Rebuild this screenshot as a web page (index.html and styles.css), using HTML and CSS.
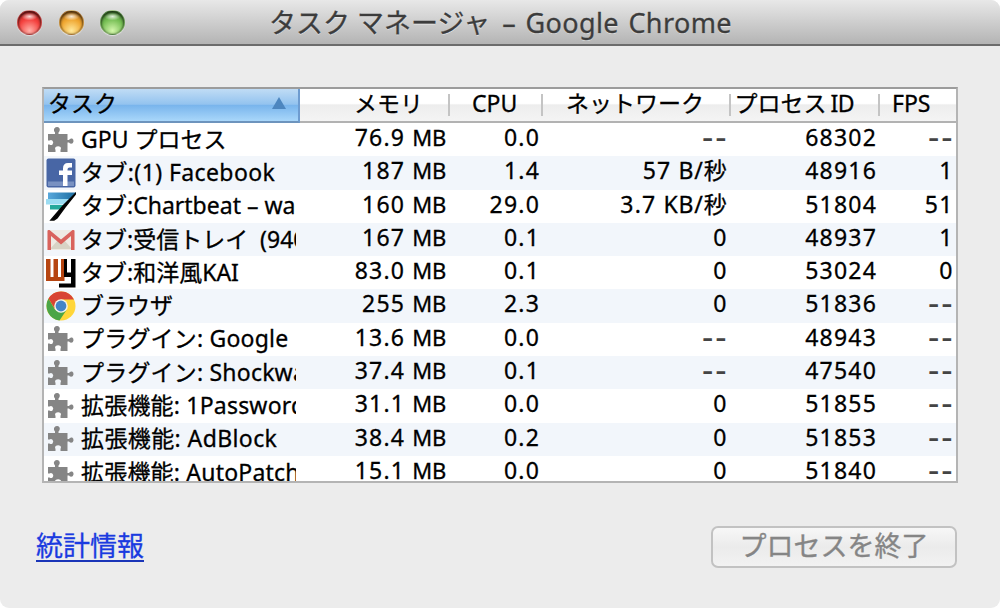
FILE: index.html
```
<!DOCTYPE html>
<html lang="ja">
<head>
    <meta charset="UTF-8">
    <title>タスク マネージャ</title>
    <link rel="stylesheet" href="styles.css">
</head>
<body>
<svg class="defs" width="0" height="0">
    <defs>
        <linearGradient id="stripe" x1="0" y1="0" x2="1" y2="0">
            <stop offset="0" stop-color="#58a8dc"/>
            <stop offset="1" stop-color="#1c6da0"/>
        </linearGradient>
        <symbol id="puzzle" viewBox="0 0 30 30">
            <path fill="#858585" d="M2 9H9V7.500Q7.500 6 8 4Q9 1.800 11.200 2Q13.900 2.300 13.800 5Q13.500 6.500 12.500 7.500V9H21.500V15H23Q24 13 26.200 13.600Q27.800 14.400 27.500 16.500Q27 18.800 25 18.700Q23.500 18.500 23 17.500H21.500V27H14.500V25Q15.500 23 14.500 21.900Q12 20.500 9.600 22Q8.500 23.500 9.500 25V27H2V19.500H3.500Q5 20.700 6.500 19.500Q8 17.500 6.500 15.700Q5 14.300 3.500 15.500H2Z"/>
        </symbol>
        <symbol id="facebook" viewBox="0 0 30 30">
            <rect x="0.500" y="0.500" width="29" height="29" rx="2" fill="#4866a5"/>
            <rect x="2" y="23.500" width="26" height="4.500" fill="#7891c2"/>
            <path fill="#fff" d="M17 28V17H13V12.500H17V10.500Q17 5 22 5H26V9.500H23.500Q21.500 9.500 21.500 11.500V12.500H26V17H21.500V28Z"/>
        </symbol>
        <symbol id="chartbeat" viewBox="0 0 30 30">
            <path fill="url(#stripe)" d="M2 1.500H30L25 8H2Z"/>
            <path fill="#9bdcf2" d="M-2 8H24L19 13.500H-2Z"/>
            <path fill="#24a99b" d="M4 14H18L14 18.500H4Z"/>
            <path d="M31 1L17 15L5 29H8L11 27L19 16Z" stroke="#050505" stroke-width="1.500"/>
        </symbol>
        <symbol id="gmail" viewBox="0 0 30 30">
            <rect x="1.500" y="5" width="27" height="20" rx="1" fill="#eeeae3"/>
            <path d="M4 24L12 15L15 17.500L18 15L26 24Z" fill="#d8d3c5"/>
            <path d="M1.500 25V6Q1.500 4.500 3.500 5L15 14.500L26.500 5Q28.500 4.500 28.500 6V25H25V11L15 19.500L5 11V25Z" fill="#d9635d"/>
        </symbol>
        <symbol id="wy" viewBox="0 0 30 30">
            <path fill="#b64511" d="M0 1H4.500V19H7.500V1H12V19H15V1H18.500V23H0Z"/>
            <path d="M18 1H21V14.500H25V1H29.500V29.500H13V25.500H25V19H18Z"/>
        </symbol>
        <symbol id="chrome" viewBox="0 0 30 30">
            <circle cx="15" cy="15" r="14.500" fill="#ffd63a"/>
            <path fill="#4ba547" d="M2.500 7.600A14.500 14.500 0 0 0 13.500 29.400L20.800 18.500L9 18.500Z"/>
            <path fill="#d84435" d="M2.500 7.600A14.500 14.500 0 0 1 28 8.500H15L9 18Z"/>
            <circle cx="15" cy="15" r="6.800" fill="#f5f5ed"/>
            <circle cx="15" cy="15" r="5.400" fill="#4385c8"/>
        </symbol>
    </defs>
</svg>
<div class="window">
    <div class="titlebar">
        <div class="lights">
            <span class="light red"></span>
            <span class="light yellow"></span>
            <span class="light green"></span>
        </div>
        <h1 class="title"><span class="title-ja">タスク マネージャ</span><span class="title-en">– Google Chrome</span></h1>
    </div>
    <div class="table">
        <div class="row head">
            <div class="th sorted"><span>タスク</span><svg class="arrow" width="16" height="14"><path d="M8 1L15 13H1Z" fill="#4d86bf"/></svg></div>
            <div class="th mem">メモリ</div>
            <div class="th cpu">CPU</div>
            <div class="th net">ネットワーク</div>
            <div class="th pid">プロセス <span>ID</span></div>
            <div class="th fps">FPS</div>
        </div>
        <div class="body">
            <div class="row"><div class="name"><svg class="icon"><use href="#puzzle"/></svg><span class="label">GPU プロセス</span></div><div class="num">76.9 <span class="unit">MB</span></div><div class="num">0.0</div><div class="num dash">--</div><div class="num">68302</div><div class="num dash">--</div></div>
            <div class="row"><div class="name"><svg class="icon"><use href="#facebook"/></svg><span class="label wider">タブ:(1) Facebook</span></div><div class="num">187 <span class="unit">MB</span></div><div class="num">1.4</div><div class="num">57 <span class="rate">B/秒</span></div><div class="num">48916</div><div class="num">1</div></div>
            <div class="row"><div class="name"><svg class="icon"><use href="#chartbeat"/></svg><span class="label">タブ:Chartbeat – wa</span></div><div class="num">160 <span class="unit">MB</span></div><div class="num">29.0</div><div class="num">3.7 <span class="rate">KB/秒</span></div><div class="num">51804</div><div class="num">51</div></div>
            <div class="row"><div class="name"><svg class="icon"><use href="#gmail"/></svg><span class="label">タブ:受信トレイ&nbsp; (940</span></div><div class="num">167 <span class="unit">MB</span></div><div class="num">0.1</div><div class="num">0</div><div class="num">48937</div><div class="num">1</div></div>
            <div class="row"><div class="name"><svg class="icon"><use href="#wy"/></svg><span class="label">タブ:和洋風KAI</span></div><div class="num">83.0 <span class="unit">MB</span></div><div class="num">0.1</div><div class="num">0</div><div class="num">53024</div><div class="num">0</div></div>
            <div class="row"><div class="name"><svg class="icon"><use href="#chrome"/></svg><span class="label">ブラウザ</span></div><div class="num">255 <span class="unit">MB</span></div><div class="num">2.3</div><div class="num">0</div><div class="num">51836</div><div class="num dash">--</div></div>
            <div class="row"><div class="name"><svg class="icon"><use href="#puzzle"/></svg><span class="label wide">プラグイン: Google</span></div><div class="num">13.6 <span class="unit">MB</span></div><div class="num">0.0</div><div class="num dash">--</div><div class="num">48943</div><div class="num dash">--</div></div>
            <div class="row"><div class="name"><svg class="icon"><use href="#puzzle"/></svg><span class="label wide">プラグイン: Shockwa</span></div><div class="num">37.4 <span class="unit">MB</span></div><div class="num">0.1</div><div class="num dash">--</div><div class="num">47540</div><div class="num dash">--</div></div>
            <div class="row"><div class="name"><svg class="icon"><use href="#puzzle"/></svg><span class="label wide">拡張機能: 1Password</span></div><div class="num">31.1 <span class="unit">MB</span></div><div class="num">0.0</div><div class="num">0</div><div class="num">51855</div><div class="num dash">--</div></div>
            <div class="row"><div class="name"><svg class="icon"><use href="#puzzle"/></svg><span class="label wider">拡張機能: AdBlock</span></div><div class="num">38.4 <span class="unit">MB</span></div><div class="num">0.2</div><div class="num">0</div><div class="num">51853</div><div class="num dash">--</div></div>
            <div class="row"><div class="name"><svg class="icon"><use href="#puzzle"/></svg><span class="label wide">拡張機能: AutoPatch</span></div><div class="num">15.1 <span class="unit">MB</span></div><div class="num">0.0</div><div class="num">0</div><div class="num">51840</div><div class="num dash">--</div></div>
        </div>
    </div>
    <div class="footer">
        <a class="stats" href="#">統計情報</a>
        <button class="end" disabled>プロセスを終了</button>
    </div>
</div>
</body>
</html>
```
FILE: styles.css
```
*{
    box-sizing: border-box;
    margin: 0;
    padding: 0;
}
body{
    background: #fff;
    font-family: "Noto Sans", "Noto Sans CJK JP", sans-serif;
    font-size: 23px;
    color: #000;
    -webkit-text-stroke: 0.300px;
}
.defs{
    position: absolute;
}
.window{
    width: 1000px;
    height: 608px;
    border-radius: 9px;
    background: #ececec;
    overflow: hidden;
}
.titlebar{
    display: flex;
    height: 46px;
    padding-left: 17px;
    background: linear-gradient(#e8e8e8, #b4b4b4);
    border-bottom: 2px solid #6c6c6c;
}
.lights{
    display: flex;
    gap: 16.500px;
    width: 252px;
    padding-top: 10px;
}
.light{
    width: 25px;
    height: 25px;
    border-radius: 50%;
    border: 1px solid #6664;
    box-shadow: inset 0 2px 3px #0009, inset 0 0 2px #0008, 0 1px 1px #fff8;
}
.red{
    background: radial-gradient(ellipse 8px 4px at 50% 24%, #fffc, #fff0), radial-gradient(circle at 50% 85%, #ffb0a8, #f4423f 50%, #b51f1f);
}
.yellow{
    background: radial-gradient(ellipse 8px 4px at 50% 24%, #fffc, #fff0), radial-gradient(circle at 50% 85%, #ffe89a, #efa630 50%, #ac651a);
}
.green{
    background: radial-gradient(ellipse 8px 4px at 50% 24%, #fffc, #fff0), radial-gradient(circle at 50% 85%, #d4f6ac, #77bf55 50%, #397a2a);
}
.title{
    display: flex;
    gap: 12px;
    font-size: 27px;
    font-weight: 400;
    line-height: 45px;
    color: #3c3c3c;
    text-shadow: 0 1px 0 #fff8;
    white-space: nowrap;
}
.title-en{
    letter-spacing: 0.400px;
    word-spacing: 2px;
}
.table{
    width: 916px;
    height: 396px;
    margin: 41px 0 0 42px;
    border: 2px solid #b4b4b4;
    border-top-color: #9c9c9c;
    background: #fff;
    overflow: hidden;
}
.row{
    display: grid;
    grid-template-columns: 256px 149px 93px 187.500px 149.500px 76.500px;
    height: 33.300px;
}
.row:nth-child(even){
    background: #f2f6fb;
}
.head{
    height: 34px;
    background: linear-gradient(#fff 45%, #ededed 50%, #f4f4f4);
    border-bottom: 2px solid #b2b2b2;
}
.th{
    position: relative;
    line-height: 29px;
    white-space: nowrap;
}
.th + .th + .th::before{
    content: "";
    position: absolute;
    left: -1px;
    top: 5px;
    width: 2px;
    height: 22px;
    background: #c4c4c4;
}
.sorted{
    display: flex;
    justify-content: space-between;
    align-items: center;
    height: 34px;
    padding: 0 11px 4px 4px;
    background: linear-gradient(#c0dcf5, #93c3ef 48%, #78b4ec 50%, #a9d7fa);
    border-right: 2px solid #6e9cd0;
    border-bottom: 2px solid #6d94bd;
}
.mem{
    padding-left: 54px;
}
.cpu{
    padding-left: 23px;
}
.net{
    padding-left: 24px;
}
.pid{
    padding-left: 5px;
}
.pid span{
    margin-left: -2px;
    letter-spacing: -0.500px;
}
.fps{
    padding-left: 13px;
}
.name{
    display: flex;
    align-items: center;
    gap: 5px;
    width: 252px;
    padding-left: 2px;
    overflow: hidden;
    white-space: nowrap;
}
.icon{
    flex: none;
    width: 30px;
    height: 30px;
}
.label{
    line-height: 28px;
    margin-top: -2px;
}
.wide{
    letter-spacing: 0.200px;
}
.wider{
    letter-spacing: 0.400px;
}
.num{
    padding-right: 2px;
    line-height: 28px;
    letter-spacing: 1.200px;
    text-align: right;
    white-space: nowrap;
}
.unit{
    margin-right: 1px;
    font-size: 22px;
    letter-spacing: -0.300px;
}
.rate{
    letter-spacing: 0.800px;
}
.dash{
    height: 30px;
    font-size: 35px;
    line-height: 26px;
    letter-spacing: 2px;
    padding-right: 1px;
    color: #444;
    -webkit-text-stroke: 0;
}
.footer{
    display: flex;
    justify-content: space-between;
    padding: 43px 43px 0 36px;
}
.stats{
    align-self: flex-start;
    height: 36px;
    font-size: 27px;
    line-height: 39px;
    color: #1a3be0;
    text-decoration: none;
    border-bottom: 2px solid #1a35b8;
}
.end{
    width: 246px;
    height: 42px;
    font: 27px/34px "Noto Sans", "Noto Sans CJK JP", sans-serif;
    color: #858585;
    padding: 0 0 2px 0;
    border: 2px solid #c2c2c2;
    border-radius: 7px;
    background: linear-gradient(#f7f7f7, #ebebeb 50%, #f2f2f2);
    -webkit-text-stroke: 0.350px;
}
```
